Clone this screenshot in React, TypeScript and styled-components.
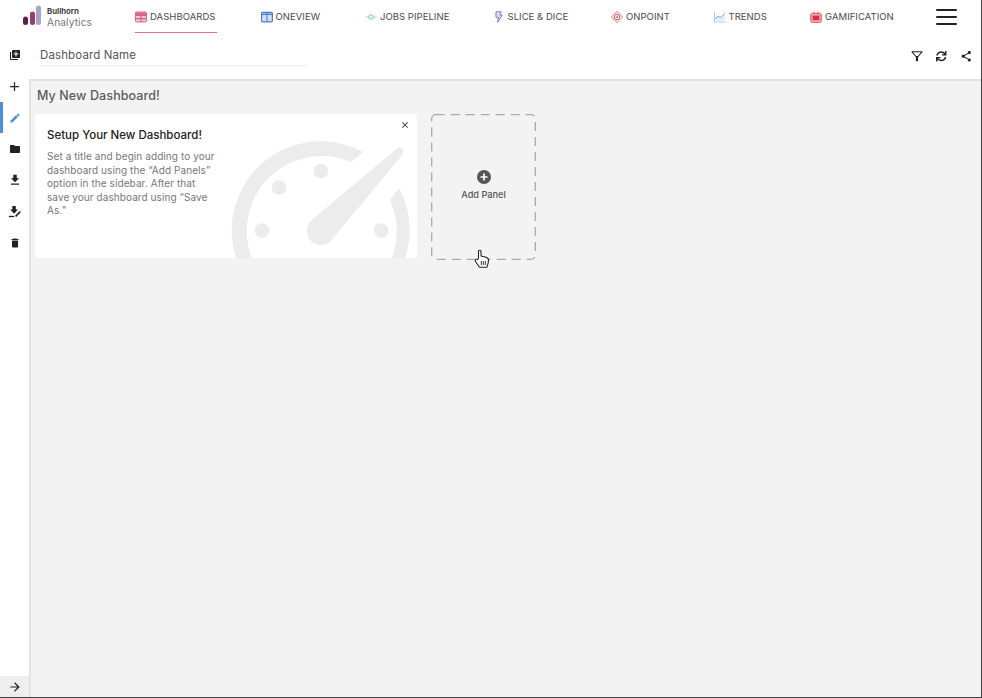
import React from "react";
import styled, { createGlobalStyle } from "styled-components";
import { MdLibraryAdd, MdAdd, MdEdit, MdFolder, MdFileDownload, MdDelete, MdShare, MdClose, MdArrowForward } from "react-icons/md";
import { FaSync } from "react-icons/fa";

const Global = createGlobalStyle`
  html, body { margin: 0; padding: 0; background: #fff; }
  body { font-family: Inter, "Open Sans", "Liberation Sans", sans-serif; }
  * { box-sizing: border-box; }
`;

const Page = styled.div`
  width: 982px; height: 698px; display: flex; flex-direction: column;
  border-right: 1px solid #444; border-bottom: 1px solid #444; background: #fff; overflow: hidden;
`;
const TopBar = styled.header`
  height: 34px; flex: none; display: flex; align-items: flex-start; padding-left: 23px;
`;
const Logo = styled.div`
  width: 112px; height: 34px; flex: none; display: flex; align-items: flex-start; gap: 6px; padding-top: 5px;
`;
const LogoText = styled.div`
  display: flex; flex-direction: column; padding-top: 1px;
`;
const LogoTop = styled.span`
  font-size: 7.8px; font-weight: 700; line-height: 10px; color: #444;
`;
const LogoBottom = styled.span`
  font-size: 10.2px; line-height: 12px; color: #777; letter-spacing: .1px;
`;
const Nav = styled.nav`
  display: flex; gap: 43.5px; height: 34px; flex: none;
`;
const NavItem = styled.a<{ $active?: boolean; $w: number }>`
  width: ${p => p.$w}px; height: 33px; display: flex; align-items: center; gap: 3px; padding-top: 2px;
  font-size: 9.5px; line-height: 14px; white-space: nowrap; color: #4a4a4a; letter-spacing: .04px;
  border-bottom: 1.5px solid ${p => (p.$active ? "#e0738a" : "transparent")};
`;
const NavIcon = styled.svg`
  width: 12px; height: 12px; flex: none;
`;
const Burger = styled.button`
  width: 21px; height: 16px; margin: 9px 0 0 43px; padding: 0; border: 0; background: none;
  display: flex; flex-direction: column; justify-content: space-between; flex: none;
`;
const BurgerLine = styled.span`
  display: block; height: 2px; background: #222; border-radius: 1px;
`;
const Body = styled.div`
  flex: 1; display: flex; min-height: 0;
`;
const Side = styled.aside`
  width: 29px; flex: none; display: flex; flex-direction: column; position: relative; padding-top: 5.5px;
`;
const SideButton = styled.div<{ $active?: boolean }>`
  height: 31.3px; flex: none; display: flex; align-items: center; justify-content: center; font-size: 12px;
  color: ${p => (p.$active ? "#4a8fe0" : "#222")};
  border-left: 3px solid ${p => (p.$active ? "#4a8fe0" : "transparent")};
  padding-right: 3px;
`;
const SideFoot = styled.div`
  margin-top: auto; height: 21px; background: #eeeeee; display: flex; align-items: center; justify-content: center; color: #222; font-size: 14px;
`;
const Main = styled.main`
  flex: 1; display: flex; flex-direction: column; min-width: 0;
`;
const Toolbar = styled.div`
  height: 45px; flex: none; display: flex; align-items: flex-start; justify-content: space-between; padding: 12px 9px 0 11px;
`;
const NameField = styled.div`
  width: 268px; height: 20px; border-bottom: 1px solid #eeeeee; font-size: 11.5px; line-height: 19px; color: #555; letter-spacing: .12px;
`;
const Tools = styled.div`
  display: flex; gap: 13px; align-items: center; padding-top: 4px; color: #222; font-size: 12.5px;
`;
const Canvas = styled.section`
  flex: 1; background: #f3f3f3; border-top: 2px solid #e2e2e2; border-left: 2px solid #e2e2e2; padding: 6px 4px;
`;
const Title = styled.h1`
  margin: 0 0 10px 2px; font-size: 12.5px; line-height: 17px; font-weight: 500; color: #5c5c5c; letter-spacing: .1px;
`;
const Panels = styled.div`
  display: flex; gap: 14px;
`;
const Card = styled.div`
  width: 382px; height: 144px; background: #fff; border-radius: 3px; position: relative; overflow: hidden; padding: 14px 12px;
`;
const CardTitle = styled.h2`
  margin: 0 0 7px; font-size: 11.5px; line-height: 15px; font-weight: 500; color: #222;
`;
const CardText = styled.p`
  margin: 0; width: 171px; font-size: 10px; line-height: 13.6px; color: #777; letter-spacing: .08px; position: relative; z-index: 1;
`;
const Gauge = styled.svg`
  position: absolute; left: 0; top: 0; width: 382px; height: 144px;
`;
const CloseBtn = styled.span`
  position: absolute; top: 6px; right: 7px; color: #333; font-size: 10px; display: flex;
`;
const AddPanel = styled.div`
  width: 105px; height: 146px; position: relative; display: flex; flex-direction: column; align-items: center; justify-content: center; gap: 5px; padding-bottom: 3px;
`;
const DashedFrame = styled.svg`
  position: absolute; inset: 0; width: 105px; height: 146px;
`;
const PlusIcon = styled.svg`
  width: 14px; height: 14px;
`;
const AddLabel = styled.span`
  font-size: 9.2px; line-height: 12px; font-weight: 500; color: #555;
`;
const Hand = styled.svg`
  position: absolute; left: 43px; top: 135px; width: 16px; height: 20px;
`;

const Bars = () => (
  <svg width="18" height="20" viewBox="0 0 18 20">
    <rect x="0" y="11.5" width="5" height="8.5" rx="2.5" fill="#5c2145" />
    <rect x="7" y="6.5" width="5" height="13.5" rx="2.5" fill="#9a3f75" />
    <rect x="13" y="0.5" width="5" height="19.5" rx="2.5" fill="#a9a3cb" />
  </svg>
);

const items: { label: string; w: number; icon: React.ReactNode; active?: boolean }[] = [
  { label: "DASHBOARDS", w: 82, active: true, icon: (
    <NavIcon viewBox="0 0 12 12"><rect x=".5" y="1" width="11" height="10" rx="1" fill="#f4c6cf" stroke="#dc6b85" /><path d="M1 4.3h10M1 7.6h10M6 4.3V11" stroke="#dc5f7c" strokeWidth="1.2" /><rect x="1" y="1.5" width="10" height="2.5" fill="#dc6b85" /></NavIcon>
  ) },
  { label: "ONEVIEW", w: 61, icon: (
    <NavIcon viewBox="0 0 12 12"><rect x=".6" y="1.4" width="10.8" height="9.4" rx="1" fill="#cfe2f7" stroke="#4a80c4" strokeWidth="1.2" /><path d="M6 2v8.5" stroke="#4a80c4" strokeWidth="1.1" /><path d="M1 3.3h10" stroke="#4a80c4" strokeWidth="1.4" /></NavIcon>
  ) },
  { label: "JOBS PIPELINE", w: 84, icon: (
    <NavIcon viewBox="0 0 12 12"><path d="M.5 6h3.2M8.3 6h3.2" stroke="#9fd6c8" strokeWidth="1" /><circle cx="6" cy="6" r="2.3" fill="#e6f5f1" stroke="#8ccbb9" strokeWidth="1" /></NavIcon>
  ) },
  { label: "SLICE & DICE", w: 75, icon: (
    <NavIcon viewBox="0 0 12 12"><path d="M3 .8h5.2L6.6 4.2h2.6L4.6 11.3l1-5H3z" fill="#e6e3f8" stroke="#7f76cf" strokeWidth="1" strokeLinejoin="round" /></NavIcon>
  ) },
  { label: "ONPOINT", w: 59, icon: (
    <NavIcon viewBox="0 0 12 12"><path d="M6 .3 11.7 6 6 11.7.3 6z" fill="#fbe4e4" stroke="#e27d7d" strokeWidth=".9" /><circle cx="6" cy="6" r="2.7" fill="#fff" stroke="#e0666a" strokeWidth="1" /><circle cx="6" cy="6" r="1" fill="#e0666a" /></NavIcon>
  ) },
  { label: "TRENDS", w: 53, icon: (
    <NavIcon viewBox="0 0 12 12"><path d="M.5 1v10h11" fill="none" stroke="#a5cdee" strokeWidth="1" /><path d="M1 9.8V8l3-3 2.2 1.7L10.8 2.6v7.2z" fill="#e3f0fb" /><path d="M1.4 8 4 5l2.2 1.7 4.6-4.1" fill="none" stroke="#68a9de" strokeWidth="1" /></NavIcon>
  ) },
  { label: "GAMIFICATION", w: 83, icon: (
    <NavIcon viewBox="0 0 12 12"><rect x=".6" y="2.4" width="10.8" height="9" rx="1.6" fill="#f3a9ad" stroke="#de5a62" strokeWidth=".9" /><rect x="2.7" y="4.6" width="6.6" height="4.6" fill="#d9303c" /><path d="M3.2.6 4.6 2.4M8.8.6 7.4 2.4" stroke="#b8434b" strokeWidth="1" /></NavIcon>
  ) },
];

const DownloadCheck = () => (
  <svg width="13" height="13" viewBox="0 0 12 12">
    <path d="M4 1h3.2v3.2h2L5.6 8 2 4.2h2z" fill="#222" />
    <path d="M.8 10.6h5" stroke="#222" strokeWidth="1.2" />
    <path d="M7 10.4 11.4 6" stroke="#222" strokeWidth="1.6" />
  </svg>
);
const FilterIcon = () => (
  <svg width="12" height="12" viewBox="0 0 12 12">
    <path d="M1 1.800h10L7 6.500H5z" fill="none" stroke="#222" strokeWidth="1.100" strokeLinejoin="round" />
    <path d="M4.900 6h2.200v5.200H4.900z" fill="#222" />
  </svg>
);

export default function App() {
  return (
    <>
      <Global />
      <Page>
        <TopBar>
          <Logo>
            <Bars />
            <LogoText>
              <LogoTop>Bullhorn</LogoTop>
              <LogoBottom>Analytics</LogoBottom>
            </LogoText>
          </Logo>
          <Nav>
            {items.map(it => (
              <NavItem key={it.label} $active={it.active} $w={it.w}>
                {it.icon}
                {it.label}
              </NavItem>
            ))}
          </Nav>
          <Burger aria-label="Menu">
            <BurgerLine />
            <BurgerLine />
            <BurgerLine />
          </Burger>
        </TopBar>
        <Body>
          <Side>
            <SideButton><MdLibraryAdd /></SideButton>
            <SideButton><MdAdd size={15} /></SideButton>
            <SideButton $active><MdEdit /></SideButton>
            <SideButton><MdFolder /></SideButton>
            <SideButton><MdFileDownload size={14} /></SideButton>
            <SideButton><DownloadCheck /></SideButton>
            <SideButton><MdDelete /></SideButton>
            <SideFoot><MdArrowForward /></SideFoot>
          </Side>
          <Main>
            <Toolbar>
              <NameField>Dashboard Name</NameField>
              <Tools>
                <FilterIcon />
                <FaSync size={10.5} />
                <MdShare />
              </Tools>
            </Toolbar>
            <Canvas>
              <Title>My New Dashboard!</Title>
              <Panels>
                <Card>
                  <Gauge viewBox="0 0 382 144">
                    <g fill="#ececec">
                      <path d="M328 38A89 89 0 1 0 364 74L355 86A75 75 0 1 1 316 48Z" />
                      <path d="M362 34.500c3-3 8.600 1.200 6 5.400L297.500 125a14.200 14.200 0 1 1-19.500-20z" />
                      <circle cx="286" cy="57" r="7.300" />
                      <circle cx="244" cy="73.500" r="7.300" />
                      <circle cx="227" cy="116.500" r="7.300" />
                      <circle cx="346" cy="116.500" r="7.300" />
                    </g>
                  </Gauge>
                  <CloseBtn><MdClose /></CloseBtn>
                  <CardTitle>Setup Your New Dashboard!</CardTitle>
                  <CardText>Set a title and begin adding to your dashboard using the “Add Panels” option in the sidebar. After that save your dashboard using “Save As.”</CardText>
                </Card>
                <AddPanel>
                  <DashedFrame viewBox="0 0 105 146">
                    <rect x=".7" y=".7" width="103.600" height="144.600" rx="4" fill="none" stroke="#aaa" strokeWidth="1.300" strokeDasharray="9 6" />
                  </DashedFrame>
                  <PlusIcon viewBox="0 0 14 14">
                    <circle cx="7" cy="7" r="7" fill="#555" />
                    <path d="M7 3.500v7M3.500 7h7" stroke="#fff" strokeWidth="1.700" />
                  </PlusIcon>
                  <AddLabel>Add Panel</AddLabel>
                  <Hand viewBox="0 0 16 20">
                    <path d="M4.500 9V2.500c0-1.700 2.500-1.700 2.500 0V7l5 1.200c1.800.5 2.500 1.500 2.500 3 0 3-1 5-1.700 7H5.500L1.500 12.500c-1-1.500.8-3 2-1.800z" fill="#fff" stroke="#222" strokeWidth="1.100" strokeLinejoin="round" />
                    <path d="M7.300 12v4M9.300 12v4M11.300 12v4" stroke="#222" strokeWidth=".9" />
                  </Hand>
                </AddPanel>
              </Panels>
            </Canvas>
          </Main>
        </Body>
      </Page>
    </>
  );
}
